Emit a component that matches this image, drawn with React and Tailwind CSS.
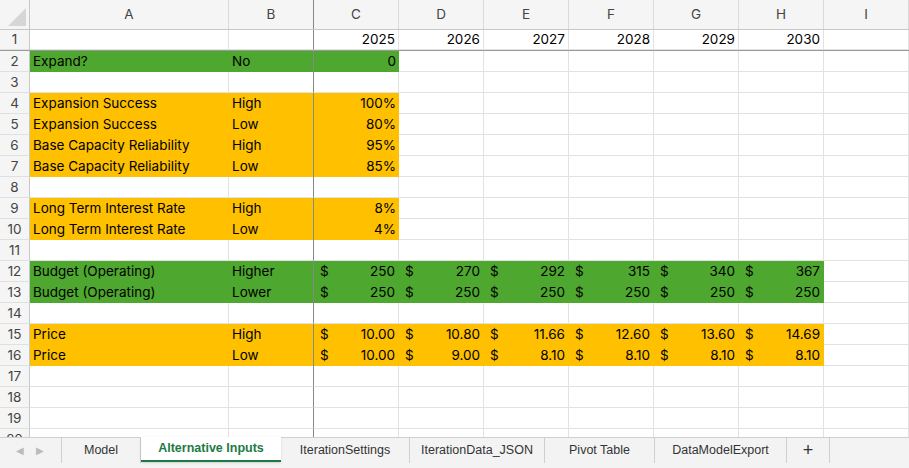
import React from "react";

const G = "bg-[#4ea72e]";
const O = "bg-[#ffc000]";
const cols = ["A", "B", "C", "D", "E", "F", "G", "H", "I"];
const widths = ["w-[199px]", "w-[85px]", "w-[85px]", "w-[85px]", "w-[85px]", "w-[85px]", "w-[85px]", "w-[85px]", "w-[85px]"];

const money = (v) => ({ money: v });
const rows = [
  { cells: ["", "", "2025", "2026", "2027", "2028", "2029", "2030"] },
  { bg: G, span: 3, cells: ["Expand?", "No", "0"] },
  { cells: [] },
  { bg: O, span: 3, cells: ["Expansion Success", "High", "100%"] },
  { bg: O, span: 3, cells: ["Expansion Success", "Low", "80%"] },
  { bg: O, span: 3, cells: ["Base Capacity Reliability", "High", "95%"] },
  { bg: O, span: 3, cells: ["Base Capacity Reliability", "Low", "85%"] },
  { cells: [] },
  { bg: O, span: 3, cells: ["Long Term Interest Rate", "High", "8%"] },
  { bg: O, span: 3, cells: ["Long Term Interest Rate", "Low", "4%"] },
  { cells: [] },
  { bg: G, span: 8, cells: ["Budget (Operating)", "Higher", ...[250, 270, 292, 315, 340, 367].map(String).map(money)] },
  { bg: G, span: 8, cells: ["Budget (Operating)", "Lower", ...["250", "250", "250", "250", "250", "250"].map(money)] },
  { cells: [] },
  { bg: O, span: 8, cells: ["Price", "High", ...["10.00", "10.80", "11.66", "12.60", "13.60", "14.69"].map(money)] },
  { bg: O, span: 8, cells: ["Price", "Low", ...["10.00", "9.00", "8.10", "8.10", "8.10", "8.10"].map(money)] },
  { cells: [] }, { cells: [] }, { cells: [] }, { cells: [] },
];

export default function App() {
  return (
    <div className="w-[909px] h-[468px] overflow-hidden bg-white flex flex-col text-[13.5px] text-black" style={{ fontFamily: "Inter, 'Liberation Sans', sans-serif" }}>
      <div className="flex-1 overflow-hidden">
        <div className="flex h-[30px] bg-[#f5f5f5] text-[#444] border-b border-[#c8c8c8]">
          <div className="w-[30px] shrink-0 relative border-r border-[#c8c8c8]">
            <div className="absolute right-[3px] bottom-[3px] w-0 h-0 border-l-[18px] border-l-transparent border-b-[18px] border-b-[#d6d6d6]"></div>
          </div>
          {cols.map((c, i) => (
            <div key={c} className={`${widths[i]} shrink-0 flex items-center justify-center border-r ${i === 1 ? "border-[#888]" : "border-[#dadada]"}`}>{c}</div>
          ))}
        </div>
        {rows.map((r, ri) => (
          <div key={ri} className={`flex h-[21px] ${ri === 0 ? "border-b border-[#999]" : ""}`}>
            <div className="w-[30px] shrink-0 bg-[#f5f5f5] text-[#444] border-r border-[#c8c8c8] border-b border-b-[#e0e0e0] flex items-center justify-center">{ri + 1}</div>
            {cols.map((c, i) => {
              const v = r.cells[i];
              const filled = r.bg && i < r.span;
              const right = i >= 2;
              return (
                <div key={c} className={`${widths[i]} shrink-0 flex items-center px-[3px] leading-none ${filled ? r.bg : "border-b border-[#e2e2e2]"} ${i === 1 ? "border-r border-r-[#888]" : filled ? "" : "border-r border-r-[#e2e2e2]"} ${right ? "justify-end" : ""}`}>
                  {v && typeof v === "object" ? (
                    <div className="flex w-full justify-between pl-[3px] pr-[1px]"><span>$</span><span>{v.money}</span></div>
                  ) : (
                    v
                  )}
                </div>
              );
            })}
          </div>
        ))}
      </div>
      <div className="h-[31px] shrink-0 bg-[#f3f3f3] border-t border-[#cfcfcf] flex items-start text-[12.5px] text-[#333]" style={{ fontFamily: "'Liberation Sans', Arial, sans-serif" }}>
        <div className="w-[62px] h-[25px] flex items-center gap-3 pl-4 text-[#bbb] text-[10px] border-r border-[#cfcfcf]"><span>◀</span><span>▶</span></div>
        {[["Model", 79], ["Alternative Inputs", 140], ["IterationSettings", 129], ["IterationData_JSON", 135], ["Pivot Table", 110], ["DataModelExport", 132]].map(([t, w]) =>
          t === "Alternative Inputs" ? (
            <div key={t} style={{ width: w }} className="h-[25px] -mt-px bg-white flex items-center justify-center text-[#1e7a45] font-bold border-b-2 border-[#1e7a45] shadow-sm">{t}</div>
          ) : (
            <div key={t} style={{ width: w }} className="h-[25px] flex items-center justify-center border-r border-[#cfcfcf]">{t}</div>
          )
        )}
        <div className="w-[43px] h-[25px] flex items-center justify-center text-[18px] border-r border-[#cfcfcf]">+</div>
      </div>
    </div>
  );
}
